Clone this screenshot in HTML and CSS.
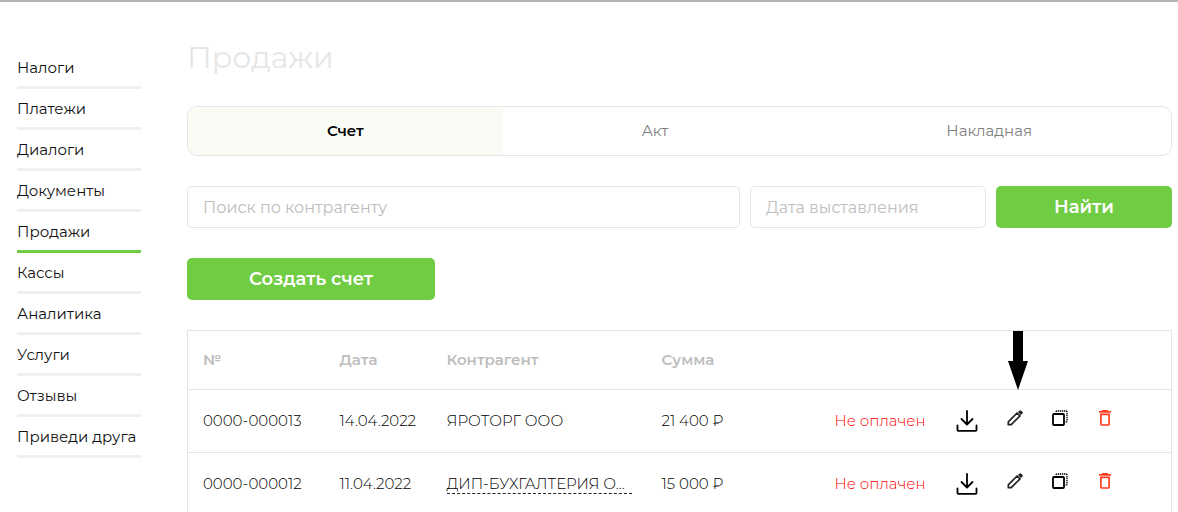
FILE: index.html
```html
<!DOCTYPE html>
<html lang="ru">
<head>
<meta charset="UTF-8">
<meta name="viewport" content="width=device-width, initial-scale=1.0">
<title>Продажи</title>
<link rel="stylesheet" href="styles.css">
</head>
<body>
  <!-- Shared icons -->
  <svg class="sprite" aria-hidden="true">
    <symbol id="download" viewBox="0 0 22 22">
      <path d="M11 1v13M5.500 9l5.500 5.500L16.500 9M1.500 15.500V20q0 .8.8.8h17.400q.8 0 .8-.8v-4.500" fill="none" stroke="#000" stroke-width="1.800" stroke-linecap="round" stroke-linejoin="round"/>
    </symbol>
    <symbol id="edit" viewBox="0 0 16 16">
      <path d="M1.300 14.700v-2.900l8.800-8.800 2.900 2.900-8.800 8.800z" fill="none" stroke="#222" stroke-width="1.700" stroke-linejoin="round"/>
      <path d="M11 2.100l1.700-1.700q.6-.5 1.200 0l1.700 1.700q.5.600 0 1.200l-1.700 1.700z" fill="#222"/>
    </symbol>
    <symbol id="copy" viewBox="0 0 16 16">
      <rect x="1" y="4" width="11" height="11" rx="1" fill="none" stroke="#000" stroke-width="1.800"/>
      <path d="M4 2q0-1 1-1h9q1 0 1 1v9q0 1-1 1h-1" fill="none" stroke="#000" stroke-width="1.300" stroke-dasharray="1.400 .7"/>
    </symbol>
    <symbol id="trash" viewBox="0 0 16 16">
      <path d="M5.500 0h5l.8 1H14v1.700H2V1h2.700z" fill="#ff3b1f"/>
      <path d="M3.900 4.400h8.200V14q0 1-1 1H4.900q-1 0-1-1z" fill="none" stroke="#ff3b1f" stroke-width="1.700"/>
    </symbol>
  </svg>

  <div class="page">
    <nav class="menu">
      <a href="#">Налоги</a>
      <a href="#">Платежи</a>
      <a href="#">Диалоги</a>
      <a href="#">Документы</a>
      <a href="#" class="active">Продажи</a>
      <a href="#">Кассы</a>
      <a href="#">Аналитика</a>
      <a href="#">Услуги</a>
      <a href="#">Отзывы</a>
      <a href="#">Приведи друга</a>
    </nav>

    <main class="content">
      <h1>Продажи</h1>

      <div class="tabs">
        <button type="button" class="active">Счет</button>
        <button type="button">Акт</button>
        <button type="button">Накладная</button>
      </div>

      <form class="filter">
        <input type="text" name="client" placeholder="Поиск по контрагенту" aria-label="Поиск по контрагенту">
        <input type="text" name="date" placeholder="Дата выставления" aria-label="Дата выставления">
        <button type="submit" class="btn">Найти</button>
      </form>

      <button type="button" class="btn create">Создать счет</button>

      <table class="invoices">
        <thead>
          <tr>
            <th class="col-number">№</th>
            <th class="col-date">Дата</th>
            <th class="col-client">Контрагент</th>
            <th class="col-sum">Сумма</th>
            <th class="col-status"></th>
            <th class="col-actions">
              <svg class="pointer" viewBox="0 0 20 59" aria-hidden="true"><path d="M5 0h10v30h5L10 59 0 30h5z"/></svg>
            </th>
          </tr>
        </thead>
        <tbody>
          <tr>
            <td>0000-000013</td>
            <td>14.04.2022</td>
            <td>ЯРОТОРГ ООО</td>
            <td>21 400 ₽</td>
            <td class="unpaid">Не оплачен</td>
            <td>
              <div class="actions">
                <button type="button" aria-label="Скачать"><svg class="icon-big"><use href="#download"/></svg></button>
                <button type="button" aria-label="Редактировать"><svg><use href="#edit"/></svg></button>
                <button type="button" aria-label="Копировать"><svg><use href="#copy"/></svg></button>
                <button type="button" aria-label="Удалить"><svg><use href="#trash"/></svg></button>
              </div>
            </td>
          </tr>
          <tr>
            <td>0000-000012</td>
            <td>11.04.2022</td>
            <td><span class="cut">ДИП-БУХГАЛТЕРИЯ О...</span></td>
            <td>15 000 ₽</td>
            <td class="unpaid">Не оплачен</td>
            <td>
              <div class="actions">
                <button type="button" aria-label="Скачать"><svg class="icon-big"><use href="#download"/></svg></button>
                <button type="button" aria-label="Редактировать"><svg><use href="#edit"/></svg></button>
                <button type="button" aria-label="Копировать"><svg><use href="#copy"/></svg></button>
                <button type="button" aria-label="Удалить"><svg><use href="#trash"/></svg></button>
              </div>
            </td>
          </tr>
        </tbody>
      </table>
    </main>
  </div>
</body>
</html>
```
FILE: styles.css
```css
* {
  box-sizing: border-box;
}
body {
  margin: 0;
  border-top: 2px solid #b5b5b5;
  background: #fff;
  color: #222;
  font-family: Montserrat, Inter, "Noto Sans", sans-serif;
  font-size: 15px;
  line-height: 20px;
}
button,
input {
  font-family: inherit;
}
button {
  padding: 0;
  border: none;
  background: none;
  cursor: pointer;
}
.sprite {
  display: none;
}
.page {
  display: flex;
  gap: 46px;
  padding: 36px 6px 0 17px;
}

/* Side menu */
.menu {
  flex: 0 0 124px;
  padding-top: 10px;
}
.menu a {
  display: block;
  padding: 10px 0 8px;
  border-bottom: 3px solid #efefef;
  color: #111;
  text-decoration: none;
  white-space: nowrap;
}
.menu a.active {
  border-color: #70cc43;
}

.content {
  flex: 1;
  min-width: 0;
}
h1 {
  margin: 0 0 28px;
  color: #e6e6e6;
  font-size: 30px;
  font-weight: 400;
  line-height: 40px;
}

/* Tabs */
.tabs {
  display: flex;
  height: 50px;
  margin-bottom: 30px;
  border: 1px solid #e5e5e5;
  border-radius: 10px;
  overflow: hidden;
}
.tabs button {
  flex: 1 1 auto;
  padding-bottom: 2px;
  color: #808080;
  font-size: 15px;
}
.tabs button.active {
  background: #f9fcf5;
  color: #000;
  font-weight: 600;
}

/* Search */
.filter {
  display: grid;
  grid-template-columns: 1fr 236px 176px;
  gap: 10px;
  margin-bottom: 30px;
}
.filter input {
  width: 100%;
  height: 42px;
  padding: 0 15px;
  border: 1px solid #e5e5e5;
  border-radius: 5px;
  font-size: 16px;
}
.filter input::placeholder {
  color: #bdbdbd;
}
.btn {
  height: 42px;
  border-radius: 5px;
  background: #70cc43;
  color: #fff;
  font-size: 18px;
  font-weight: 600;
}
.create {
  display: block;
  width: 248px;
  margin-bottom: 30px;
}

/* Invoices */
.invoices {
  width: 100%;
  border: 1px solid #e5e5e5;
  border-collapse: collapse;
  table-layout: fixed;
}
.invoices th,
.invoices td {
  padding: 0 0 0 15px;
  border-bottom: 1px solid #e5e5e5;
  text-align: left;
  white-space: nowrap;
}
.invoices th {
  position: relative;
  height: 59px;
  color: #bdbdbd;
  font-weight: 600;
}
.invoices td {
  height: 63px;
  color: #000;
  font-weight: 300;
}
.invoices td.unpaid {
  color: #f00;
}
.col-number {
  width: 137px;
}
.col-date {
  width: 107px;
}
.col-client {
  width: 215px;
}
.col-sum {
  width: 173px;
}
.col-status {
  width: 121px;
}
.cut {
  display: inline-block;
  width: 185px;
  border-bottom: 1px dashed #222;
  line-height: 18px;
}
.actions {
  display: flex;
  align-items: flex-start;
  gap: 29px;
}
.actions svg {
  display: block;
  width: 16px;
  height: 16px;
}
.actions .icon-big {
  width: 22px;
  height: 22px;
}
.pointer {
  position: absolute;
  top: 0;
  left: 67px;
  width: 20px;
  height: 59px;
  fill: #000;
}
```
